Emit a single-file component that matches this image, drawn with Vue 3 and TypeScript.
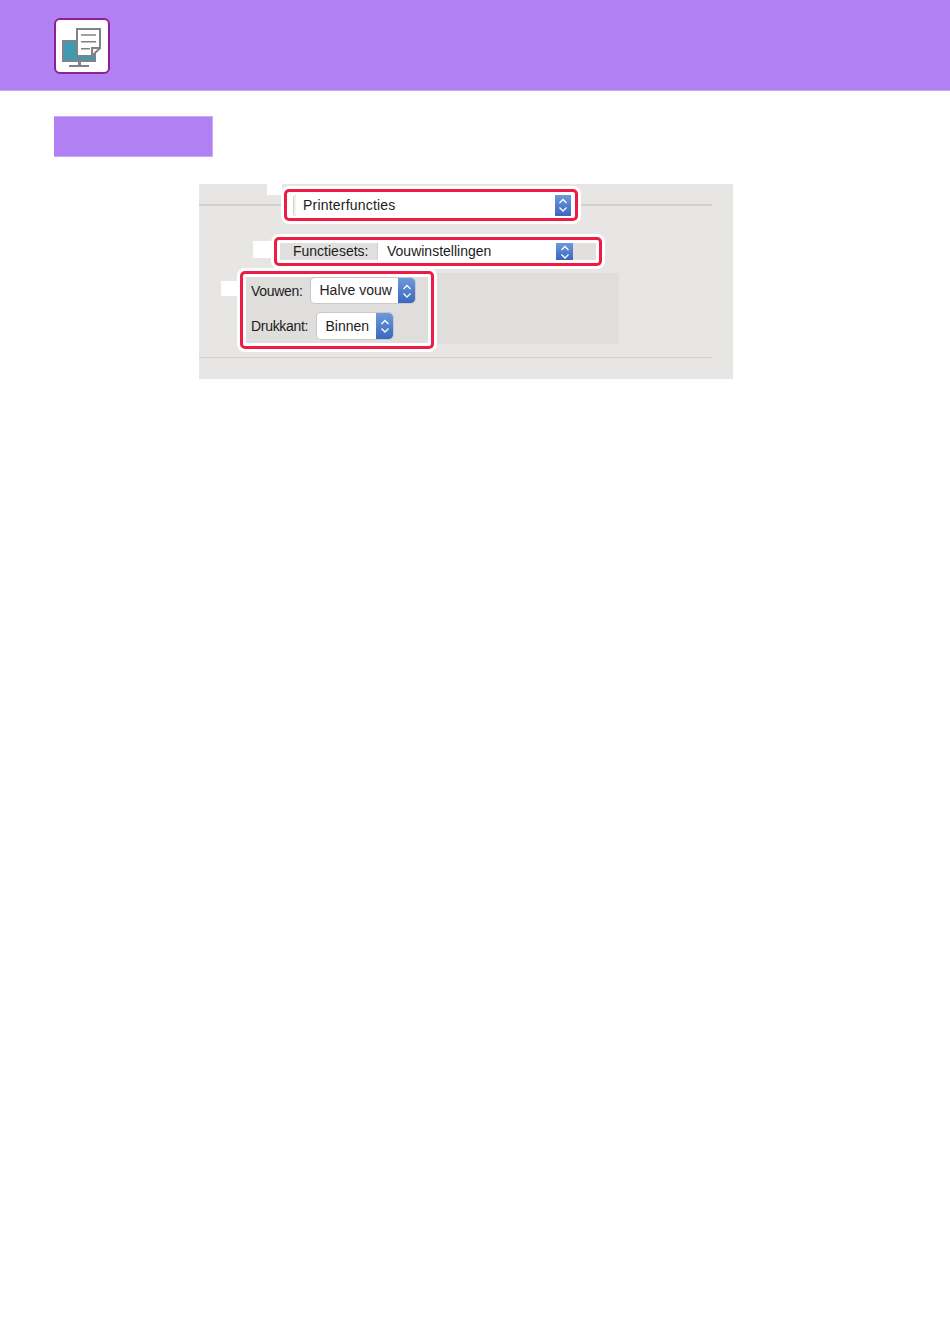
<template>
  <div class="page">
    <header class="top-bar">
      <div class="app-icon">
        <svg width="52" height="52" viewBox="0 0 52 52">
          <rect x="7" y="21" width="32" height="20" fill="#4497b0" stroke="#808285" stroke-width="2" />
          <rect x="22" y="42" width="3" height="4" fill="#808285" />
          <rect x="13" y="45" width="20" height="2" fill="#808285" />
          <path d="M21 9H44V28L36 36H21Z" fill="#fff" stroke="#808285" stroke-width="2" />
          <path d="M25 15H40M25 21.7H40M25 28.700H34" stroke="#808285" stroke-width="1.500" fill="none" />
          <path d="M36 37V28H45" fill="none" stroke="#808285" stroke-width="2" />
        </svg>
      </div>
    </header>

    <div class="section-tab"></div>

    <section class="shot">
      <span class="mark mark-a"></span>
      <span class="mark mark-b"></span>
      <span class="mark mark-c"></span>

      <div class="row row-preset">
        <div class="rule rule-left"></div>
        <div class="callout preset-box">
          <span class="preset-edge"></span>
          <span class="preset-label">Printerfuncties</span>
          <span class="stepper square"><svg width="12" height="16" viewBox="0 0 12 16"><path d="M2.500 6L6 2.500L9.500 6M2.500 10.500L6 14L9.500 10.500" /></svg></span>
        </div>
        <div class="rule rule-right"></div>
      </div>

      <div class="callout sets-box">
        <span class="sets-label">Functiesets:</span>
        <div class="sets-value">
          <span>Vouwinstellingen</span>
          <span class="stepper square"><svg width="12" height="16" viewBox="0 0 12 16"><path d="M2.500 6L6 2.500L9.500 6M2.500 10.500L6 14L9.500 10.500" /></svg></span>
        </div>
      </div>

      <div class="row row-options">
        <div class="callout options-box">
          <div class="options-inner">
            <div class="option" v-for="opt in options" :key="opt.label">
              <label :style="{ width: opt.labelWidth + 'px' }">{{ opt.label }}</label>
              <div class="select" :style="{ width: opt.width + 'px' }">
                <span class="select-text">{{ opt.value }}</span>
                <span class="stepper"><svg width="12" height="16" viewBox="0 0 12 16"><path d="M2.500 6L6 2.500L9.500 6M2.500 10.500L6 14L9.500 10.500" /></svg></span>
              </div>
            </div>
          </div>
        </div>
        <div class="options-fill"></div>
      </div>

      <div class="rule rule-bottom"></div>
    </section>
  </div>
</template>

<script setup lang="ts">
const options = [
  { label: 'Vouwen:', value: 'Halve vouw', labelWidth: 60, width: 104 },
  { label: 'Drukkant:', value: 'Binnen', labelWidth: 66, width: 76 }
]
</script>

<style>
html,
body {
  background: #fff;
}
</style>

<style scoped>
.page {
  width: 950px;
  height: 1344px;
  font-family: "Liberation Sans", Arial, sans-serif;
  color: #1c1c1c;
  overflow: hidden;
}

.top-bar {
  height: 91px;
  box-sizing: border-box;
  background: #b180f2;
  border-bottom: 1px solid #c9a6f6;
  display: flex;
  align-items: flex-start;
  padding: 18px 0 0 54px;
}

.app-icon {
  width: 52px;
  height: 52px;
  border: 2px solid #8e1f96;
  border-radius: 6px;
  background: #fff;
}

.app-icon svg {
  display: block;
}

.section-tab {
  width: 159px;
  height: 41px;
  margin: 25px 0 0 54px;
  background: #b180f2;
  box-sizing: border-box;
  border-right: 1px solid #cdaaf7;
  border-bottom: 1px solid #cdaaf7;
  border-top: 1px solid #cdaaf7;
}

.shot {
  position: relative;
  width: 534px;
  height: 195px;
  margin: 27px 0 0 199px;
  padding-top: 2px;
  box-sizing: border-box;
  background: #e7e6e4;
  font-size: 14px;
}

/* white squares that blank out the numbers in the original picture */
.mark {
  position: absolute;
  background: #fff;
}

.mark-a {
  left: 68px;
  top: 0;
  width: 15px;
  height: 11px;
}

.mark-b {
  left: 54px;
  top: 57px;
  width: 18px;
  height: 17px;
}

.mark-c {
  left: 22px;
  top: 97px;
  width: 16px;
  height: 15px;
}

.row {
  display: flex;
}

.row-preset {
  align-items: center;
}

.rule {
  height: 2px;
  background: #d2d1cf;
}

.rule-left {
  width: 83px;
}

.rule-right {
  width: 132px;
}

.rule-bottom {
  width: 513px;
  height: 1px;
  margin-top: 8px;
}

.callout {
  box-sizing: border-box;
  border: 3px solid #ee1c44;
  border-radius: 5px;
  box-shadow: 0 0 0 3px #fff;
  position: relative;
}

.preset-box {
  width: 294px;
  height: 32px;
  margin: 3px 2px;
  background: #fff;
  display: flex;
  align-items: center;
  padding-left: 6px;
}

.preset-edge {
  width: 3px;
  height: 21px;
  box-sizing: border-box;
  background: #f1f1ef;
  border-left: 1px solid #cfcfcd;
  border-radius: 3px 0 0 3px;
}

.preset-label {
  margin-left: 7px;
  flex: 1;
  letter-spacing: 0.2px;
}

.stepper {
  flex: none;
  width: 17px;
  height: 100%;
  display: flex;
  align-items: center;
  justify-content: center;
  background: linear-gradient(#6d99dc, #3a68bd);
  border-radius: 0 4px 4px 0;
}

.stepper.square {
  height: 21px;
  border-radius: 0;
}

.stepper svg path {
  fill: none;
  stroke: #fff;
  stroke-width: 1.300;
}

.preset-box .stepper {
  width: 16px;
  margin-right: 4px;
}

.sets-box {
  width: 328px;
  height: 29px;
  margin: 13px 0 0 75px;
  display: flex;
  background: #fff;
  padding: 3px;
}

.sets-label {
  width: 98px;
  box-sizing: border-box;
  background: #e1e0de;
  padding-left: 13px;
  border-right: 1px solid #cfcfcd;
  line-height: 17px;
}

.sets-value {
  flex: 1;
  display: flex;
  align-items: center;
  justify-content: space-between;
  padding-left: 9px;
  padding-right: 23px;
  line-height: 17px;
  background: linear-gradient(90deg, #fff 195px, #e1e0de 195px);
}

.sets-value .stepper {
  height: 17px;
}

.row-options {
  margin-top: 5px;
  margin-left: 41px;
  align-items: flex-start;
}

.options-box {
  width: 194px;
  height: 78px;
  background: #fff;
  padding: 3px;
}

.options-inner {
  height: 66px;
  background: #dfdedc;
  padding: 1px 0 0 5px;
  box-sizing: border-box;
  display: flex;
  flex-direction: column;
  gap: 10px;
}

.option {
  display: flex;
  align-items: center;
}

.option label {
  letter-spacing: -0.3px;
}

.select {
  height: 25px;
  display: flex;
  box-sizing: border-box;
  background: #fff;
  border-radius: 4px;
  box-shadow: 0 0 0 1px #c9c8c6;
  overflow: hidden;
  line-height: 25px;
}

.option:last-child .select {
  height: 26px;
  line-height: 26px;
}

.select-text {
  flex: 1;
  padding-left: 8.500px;
}

.options-fill {
  width: 185px;
  height: 71px;
  background: #dfdedc;
  margin-top: 2px;
}
</style>
